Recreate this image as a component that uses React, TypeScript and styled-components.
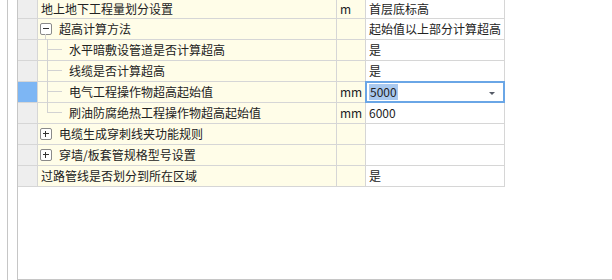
import React from "react";
import styled, { createGlobalStyle, css } from "styled-components";

const GlobalStyle = createGlobalStyle`
  html, body {
    margin: 0;
    padding: 0;
    background: #ffffff;
  }
  body {
    font-family: "Noto Sans CJK SC", "Liberation Sans", sans-serif;
    font-size: 12px;
    color: #222222;
  }
`;

type TreeKind = "none" | "group" | "child" | "lastChild";

interface RowData {
  name: string;
  unit?: string;
  value?: string;
  tree: TreeKind;
  toggle?: "-" | "+";
  editing?: boolean;
}

const rows: RowData[] = [
  { name: "地上地下工程量划分设置", unit: "m", value: "首层底标高", tree: "none" },
  { name: "超高计算方法", value: "起始值以上部分计算超高", tree: "group", toggle: "-" },
  { name: "水平暗敷设管道是否计算超高", value: "是", tree: "child" },
  { name: "线缆是否计算超高", value: "是", tree: "child" },
  { name: "电气工程操作物超高起始值", unit: "mm", value: "5000", tree: "child", editing: true },
  { name: "刷油防腐绝热工程操作物超高起始值", unit: "mm", value: "6000", tree: "lastChild" },
  { name: "电缆生成穿刺线夹功能规则", tree: "none", toggle: "+" },
  { name: "穿墙/板套管规格型号设置", tree: "none", toggle: "+" },
  { name: "过路管线是否划分到所在区域", value: "是", tree: "none" },
];

const Page = styled.div`
  height: 280px;
  display: flex;
  overflow: hidden;
`;

const Gutter = styled.div`
  width: 7px;
  border-right: 1px solid #c6c6c6;
  margin-right: 9px;
`;

const Frame = styled.div`
  flex: 1;
  height: 279px;
  border-left: 1px solid #c6c6c6;
  border-bottom: 1px solid #c6c6c6;
  overflow: hidden;
`;

const Grid = styled.div`
  display: grid;
  grid-template-columns: 20px 299px 29px 139px;
  grid-template-rows: 19px;
  grid-auto-rows: 21px;
  width: max-content;
`;

const Cell = styled.div`
  box-sizing: border-box;
  border-right: 1px solid #d6d6d6;
  border-bottom: 1px solid #d6d6d6;
  display: flex;
  align-items: center;
  white-space: nowrap;
  line-height: 16px;
  position: relative;
`;

const HeaderCell = styled(Cell)<{ $selected?: boolean }>`
  background: ${(p) => (p.$selected ? "#7db6f4" : "#eeeeee")};
`;

const NameCell = styled(Cell)`
  background: #fffde8;
  padding-left: 2px;
`;

const UnitCell = styled(Cell)`
  background: #fffde8;
  padding-left: 3px;
`;

const ValueCell = styled(Cell)`
  background: #ffffff;
  padding-left: 3px;
`;

const Label = styled.span<{ $offset: number }>`
  padding-left: ${(p) => p.$offset}px;
`;

const ToggleBox = styled.span`
  box-sizing: border-box;
  width: 12px;
  height: 12px;
  border: 1px solid #8a8a8a;
  border-radius: 2px;
  background: #ffffff;
  position: relative;
  flex: none;
  margin-right: 7px;
  &::before {
    content: "";
    position: absolute;
    left: 2px;
    right: 2px;
    top: 4px;
    height: 1px;
    background: #333333;
  }
`;

const PlusBox = styled(ToggleBox)`
  &::after {
    content: "";
    position: absolute;
    top: 2px;
    bottom: 2px;
    left: 4px;
    width: 1px;
    background: #333333;
  }
`;

const GroupStem = styled.span`
  position: absolute;
  left: 7px;
  top: 15px;
  bottom: -1px;
  width: 1px;
  background: #d2d2d2;
`;

const Connector = styled.span<{ $last?: boolean }>`
  position: relative;
  width: 29px;
  height: 21px;
  flex: none;
  margin-top: -1px;
  &::before {
    content: "";
    position: absolute;
    left: 7px;
    top: 0;
    width: 1px;
    ${(p) =>
      p.$last
        ? css`
            height: 11px;
          `
        : css`
            bottom: 0;
          `}
    background: #d2d2d2;
  }
  &::after {
    content: "";
    position: absolute;
    left: 8px;
    top: 10px;
    width: 14px;
    height: 1px;
    background: #d2d2d2;
  }
`;

const Editor = styled.div`
  position: absolute;
  top: -1px;
  left: -1px;
  right: -1px;
  bottom: -1px;
  border: 2px solid #6aa6e6;
  background: #ffffff;
  z-index: 2;
  display: flex;
  align-items: center;
  padding-left: 2px;
`;

const Selected = styled.span`
  background: #a9c9ef;
  line-height: 16px;
  padding: 0 1px;
`;

const Arrow = styled.span`
  margin-left: auto;
  margin-right: 8px;
  width: 0;
  height: 0;
  border-left: 3px solid transparent;
  border-right: 3px solid transparent;
  border-top: 3px solid #555a66;
  position: relative;
  top: 1px;
`;

const NameContent: React.FC<{ row: RowData }> = ({ row }) => {
  if (row.tree === "child" || row.tree === "lastChild") {
    return (
      <>
        <Connector $last={row.tree === "lastChild"} />
        <Label $offset={0}>{row.name}</Label>
      </>
    );
  }
  if (row.toggle) {
    return (
      <>
        {row.toggle === "-" ? <ToggleBox /> : <PlusBox />}
        {row.tree === "group" && <GroupStem />}
        <Label $offset={0}>{row.name}</Label>
      </>
    );
  }
  return <Label $offset={1}>{row.name}</Label>;
};

export default function App() {
  return (
    <>
      <GlobalStyle />
      <Page>
        <Gutter />
        <Frame>
          <Grid>
            {rows.map((row, i) => (
              <React.Fragment key={i}>
                <HeaderCell $selected={row.editing} />
                <NameCell>
                  <NameContent row={row} />
                </NameCell>
                <UnitCell>{row.unit}</UnitCell>
                <ValueCell>
                  {row.editing ? (
                    <Editor>
                      <Selected>{row.value}</Selected>
                      <Arrow />
                    </Editor>
                  ) : (
                    row.value
                  )}
                </ValueCell>
              </React.Fragment>
            ))}
          </Grid>
        </Frame>
      </Page>
    </>
  );
}
